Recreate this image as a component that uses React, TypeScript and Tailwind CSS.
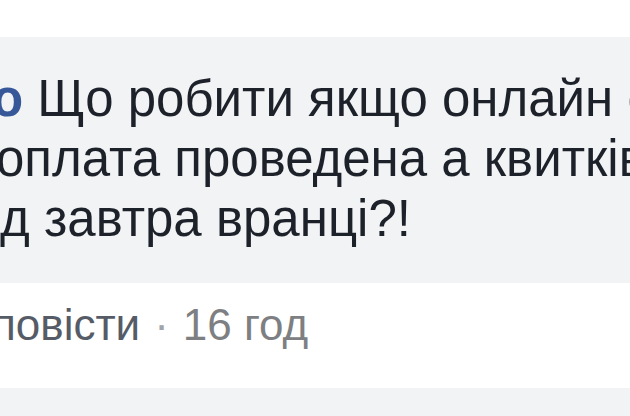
import React from 'react';

const lines = [
    { pre: 'о', text: ' Що робити якщо онлайн сервіс', shift: '-ml-[8px]' },
    { pre: '', text: 'оплата проведена а квитків немає', shift: '-ml-[4px]' },
    { pre: '', text: 'д завтра вранці?!', shift: 'ml-0' },
];

const App: React.FC = () => {
    return (
        <div className="w-[630px] h-[416px] overflow-hidden bg-white font-['Liberation_Sans',Arial,sans-serif]">
            <div className="h-[37px] bg-white" />
            <div className="h-[246px] bg-[#f2f3f5] pt-[32px] text-[51px] leading-[60px] text-[#1d2129] whitespace-nowrap">
                {lines.map((l, i) => (
                    <div key={i} className={l.shift}>
                        {l.pre && <span className="font-bold text-[#365899]">{l.pre}</span>}
                        {l.text}
                    </div>
                ))}
            </div>
            <div className="h-[105px] bg-white pt-[12px] text-[44px] leading-[60px] whitespace-nowrap -ml-[8px]">
                <span className="text-[#565c67]">повісти</span>
                <span className="text-[#a0a3a8] mx-[14px]">·</span>
                <span className="text-[#7d7f82]">16 год</span>
            </div>
            <div className="h-[28px] bg-[#f2f3f5]" />
        </div>
    );
};

export default App;
